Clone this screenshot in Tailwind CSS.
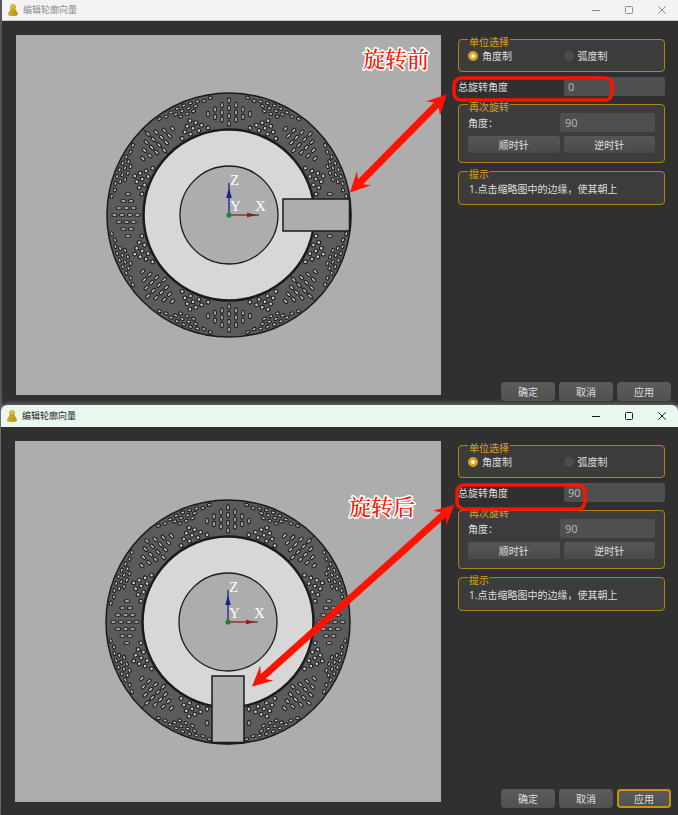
<!DOCTYPE html>
<html lang="zh-CN">
<head>
    <meta charset="UTF-8">
    <meta name="viewport" content="width=device-width, initial-scale=1.0">
    <title>编辑轮廓向量</title>
    <script src="https://cdn.jsdelivr.net/npm/@tailwindcss/browser@4"></script>
</head>
<body class="bg-[#55555a] font-['Noto_Sans','Noto_Sans_CJK_SC',sans-serif] text-[10px] leading-[14px] text-[#dedede]">

    <!-- Formas compartidas -->
    <svg class="absolute size-0" aria-hidden="true">
        <defs>
            <linearGradient id="gold" x1="0" y1="0" x2="1" y2="1">
                <stop offset="0" stop-color="#f3dc3c"/>
                <stop offset="1" stop-color="#b98a08"/>
            </linearGradient>
            <symbol id="logo" viewBox="0 0 10 12">
                <path d="M5 .4c1.500 0 2.600 1.100 2.600 2.500 0 .9-.4 1.600-1 2.100 1 .6 1.500 1.400 1.500 2.300 1 .8 1.500 1.900 1.500 3 0 .9-2 1.400-4.600 1.400S.4 11.200.4 10.300c0-1.100.5-2.200 1.500-3 0-.9.500-1.700 1.500-2.300-.6-.5-1-1.200-1-2.100C2.400 1.500 3.500.4 5 .4z" fill="url(#gold)" stroke="#9a7a10" stroke-width=".5"/>
                <path d="M3 5.300c1.200.6 2.800.6 4 0M2 7.700c1.600 1 4.400 1 6 0" fill="none" stroke="#9a7a10" stroke-width=".6"/>
            </symbol>

            <rect id="slot" x="-1.300" y="-2.600" width="2.600" height="5.200" rx="1.300"/>
            <rect id="seed" x="-2.100" y="-1.300" width="4.200" height="2.600" rx="1.300"/>
            <circle id="dot" r="1.900"/>

            <g id="slots">
                <use href="#slot" x="0" y="-114.500"/><use href="#slot" x="0" y="-107"/><use href="#slot" x="0" y="-99"/><use href="#slot" x="0" y="-91.500"/>
                <use href="#slot" x="-7" y="-110"/><use href="#slot" x="-7" y="-102.500"/><use href="#slot" x="-7" y="-95.500"/>
                <use href="#slot" x="7" y="-110"/><use href="#slot" x="7" y="-102.500"/><use href="#slot" x="7" y="-95.500"/>
                <use href="#slot" x="-14" y="-105.500"/><use href="#slot" x="-14" y="-98"/>
                <use href="#slot" x="14" y="-105.500"/><use href="#slot" x="14" y="-98"/>
                <use href="#slot" x="-21" y="-101"/><use href="#slot" x="21" y="-101"/>
            </g>
            <g id="dots">
                <use href="#dot" x="-14" y="-88.500"/><use href="#dot" x="-4.600" y="-89.500"/><use href="#dot" x="4.600" y="-89.500"/><use href="#dot" x="14" y="-88.500"/>
                <use href="#dot" x="-9" y="-93.500"/><use href="#dot" x="0" y="-94"/><use href="#dot" x="9" y="-93.500"/>
                <use href="#dot" x="-4.600" y="-98"/><use href="#dot" x="4.600" y="-98"/>
                <use href="#dot" x="0" y="-102"/>
            </g>
            <g id="seeds">
                <use href="#seed" x="0" y="-118.500"/><use href="#seed" x="-7.200" y="-118"/><use href="#seed" x="7.200" y="-118"/><use href="#seed" x="-14.300" y="-117"/><use href="#seed" x="14.300" y="-117"/>
                <use href="#seed" x="-3.600" y="-114"/><use href="#seed" x="3.600" y="-114"/><use href="#seed" x="-10.800" y="-113.300"/><use href="#seed" x="10.800" y="-113.300"/><use href="#seed" x="-20.500" y="-115"/><use href="#seed" x="20.500" y="-115"/>
                <use href="#seed" x="0" y="-109.500"/><use href="#seed" x="-7" y="-109.500"/><use href="#seed" x="7" y="-109.500"/>
                <use href="#seed" x="-27.500" y="-115.500"/><use href="#seed" x="27.500" y="-115.500"/>
            </g>
            <g id="sector">
                <use href="#slots"/>
                <use href="#dots" transform="rotate(22.500)"/>
                <use href="#seeds" transform="rotate(22.500)"/>
            </g>

            <g id="part" stroke="#1b1b1b">
                <circle r="122" fill="#5b5b5b" stroke-width="1.500"/>
                <path d="M-86-86l25 25M86 86l-25-25" stroke-width="1"/>
                <g fill="#c8c8c8" stroke-width="1.100">
                    <use href="#sector"/>
                    <use href="#sector" transform="rotate(45)"/>
                    <use href="#sector" transform="rotate(90)"/>
                    <use href="#sector" transform="rotate(135)"/>
                    <use href="#sector" transform="rotate(180)"/>
                    <use href="#sector" transform="rotate(225)"/>
                    <use href="#sector" transform="rotate(270)"/>
                    <use href="#sector" transform="rotate(315)"/>
                </g>
                <circle r="85.500" fill="#d7d7d7" stroke-width="2.500"/>
                <circle r="49" fill="#adadad" stroke-width="1.300"/>
                <path d="M54-16h66.500a122 122 0 0 1 0 32H54z" fill="#adadad" stroke-width="1.500"/>
                <path d="M120.500-16v32" stroke-width="1.500"/>
            </g>
            <g id="axes">
                <path d="M0 0V-32" stroke="#20208c" stroke-width="1.300"/>
                <path d="M0-27l2.800 10h-5.600z" fill="#20208c"/>
                <path d="M0 0H30" stroke="#8c2020" stroke-width="1.300"/>
                <path d="M28 0l-10-2.300v4.600z" fill="#8c2020"/>
                <circle r="2.600" fill="#178a2a"/>
                <g fill="#fff" font-family="Liberation Serif, serif" font-size="15">
                    <text x="1" y="-30">Z</text>
                    <text x="1" y="-4">Y</text>
                    <text x="26" y="-4">X</text>
                </g>
            </g>
        </defs>
    </svg>

    <div class="relative">
        <!-- Ventana antes de rotar -->
        <section class="ml-[2px] bg-[#303030]">
            <header class="flex h-[21px] items-center border-b border-[#c8c8c8] bg-[#f3f3f3] pl-1.5 text-[#8c8c8c]">
                <svg class="h-3 w-2.5"><use href="#logo"/></svg>
                <h1 class="ml-[5px] flex-1 text-[9px] leading-3">编辑轮廓向量</h1>
                <button type="button" aria-label="最小化" class="flex h-5 w-[33px] items-center justify-center"><svg class="size-2" viewBox="0 0 8 8" fill="none" stroke="currentColor"><path d="M0 4.500h8"/></svg></button>
                <button type="button" aria-label="最大化" class="flex h-5 w-[33px] items-center justify-center"><svg class="size-2" viewBox="0 0 8 8" fill="none" stroke="currentColor"><rect x=".5" y=".5" width="7" height="7" rx="1"/></svg></button>
                <button type="button" aria-label="关闭" class="flex h-5 w-[33px] items-center justify-center"><svg class="size-2" viewBox="0 0 8 8" fill="none" stroke="currentColor"><path d="M.3.3l7.400 7.400M7.700.3L.3 7.700"/></svg></button>
            </header>
            <div class="flex pl-3.5">
                <div class="mt-3.5 mb-2.5 flex h-[360px] flex-1 items-center justify-center bg-[#adadad]">
                    <svg class="size-[250px]" viewBox="-125 -125 250 250">
                        <use href="#part"/>
                        <use href="#axes"/>
                    </svg>
                </div>
                <form class="flex w-[237px] flex-col justify-between pt-[11px] pb-1 pl-[17px]">
                    <div class="mr-[13px]">
                        <fieldset class="rounded border border-[#b08318] bg-[#3c3c3c] px-[9px] pb-1.5">
                            <legend class="px-px pt-[5px] leading-[10px] text-[#d9a01c]">单位选择</legend>
                            <div class="grid h-[18px] grid-cols-2 items-center gap-1">
                                <label class="flex items-center gap-1"><input type="radio" name="unit1" checked class="size-2.5 appearance-none rounded-full bg-[#4c4c4c] checked:border-3 checked:border-[#d9a01c] checked:bg-white">角度制</label>
                                <label class="flex items-center gap-1"><input type="radio" name="unit1" class="size-2.5 appearance-none rounded-full bg-[#4c4c4c] checked:border-3 checked:border-[#d9a01c] checked:bg-white">弧度制</label>
                            </div>
                        </fieldset>
                        <div class="mt-[5px] flex items-center justify-between">
                            <label for="total1">总旋转角度</label>
                            <input id="total1" type="text" value="0" class="h-[19px] w-[101px] rounded-xs bg-[#4f4f4f] px-1 text-[11px] text-[#b4b4b4]">
                        </div>
                        <fieldset class="mt-px rounded border border-[#b08318] bg-[#3c3c3c] px-[9px] pb-[9px]">
                            <legend class="px-px pt-[5px] leading-[10px] text-[#d9a01c]">再次旋转</legend>
                            <div class="mt-px flex items-center justify-between">
                                <label for="angle1">角度：</label>
                                <input id="angle1" type="text" value="90" class="h-[19px] w-[95px] rounded-xs bg-[#4f4f4f] px-[5px] text-[11px] text-[#b4b4b4]">
                            </div>
                            <div class="mt-1 grid grid-cols-2 gap-1">
                                <button type="button" class="h-[17px] rounded-[3px] bg-linear-to-b from-[#565656] to-[#4a4a4a]">顺时针</button>
                                <button type="button" class="h-[17px] rounded-[3px] bg-linear-to-b from-[#565656] to-[#4a4a4a]">逆时针</button>
                            </div>
                        </fieldset>
                        <fieldset class="mt-px rounded border border-[#b08318] bg-[#3c3c3c] px-[9px] pb-1.5">
                            <legend class="px-px pt-[5px] leading-[10px] text-[#d9a01c]">提示</legend>
                            <p class="mt-px h-[18px] pl-px leading-[18px]">1.点击缩略图中的边缘，使其朝上</p>
                        </fieldset>
                    </div>
                    <div class="mr-[7px] flex justify-end gap-1">
                        <button type="button" class="h-[19px] w-[54px] rounded bg-linear-to-b from-[#5c5c5c] to-[#505050]">确定</button>
                        <button type="button" class="h-[19px] w-[54px] rounded bg-linear-to-b from-[#5c5c5c] to-[#505050]">取消</button>
                        <button type="button" class="h-[19px] w-[54px] rounded bg-linear-to-b from-[#5c5c5c] to-[#505050]">应用</button>
                    </div>
                </form>
            </div>
        </section>

        <!-- Ventana después de rotar -->
        <section class="relative ml-px rounded-t-md bg-[#303030] shadow-[0_0_6px_#8a8a8a]">
            <header class="flex h-[22px] items-center rounded-t-md bg-[#e9f7ef] pl-1.5 text-[#1c1c1c]">
                <svg class="h-3 w-2.5"><use href="#logo"/></svg>
                <h1 class="ml-[5px] flex-1 text-[9px] leading-3">编辑轮廓向量</h1>
                <button type="button" aria-label="最小化" class="flex h-5 w-[33px] items-center justify-center"><svg class="size-2" viewBox="0 0 8 8" fill="none" stroke="currentColor"><path d="M0 4.500h8"/></svg></button>
                <button type="button" aria-label="最大化" class="flex h-5 w-[33px] items-center justify-center"><svg class="size-2" viewBox="0 0 8 8" fill="none" stroke="currentColor"><rect x=".5" y=".5" width="7" height="7" rx="1"/></svg></button>
                <button type="button" aria-label="关闭" class="flex h-5 w-[33px] items-center justify-center"><svg class="size-2" viewBox="0 0 8 8" fill="none" stroke="currentColor"><path d="M.3.3l7.400 7.400M7.700.3L.3 7.700"/></svg></button>
            </header>
            <div class="flex pl-3.5">
                <div class="mt-3.5 mb-[13px] flex h-[361px] flex-1 items-center justify-center bg-[#adadad]">
                    <svg class="size-[250px]" viewBox="-125 -125 250 250">
                        <use href="#part" transform="rotate(90)"/>
                        <use href="#axes"/>
                    </svg>
                </div>
                <form class="flex w-[237px] flex-col justify-between pt-[11px] pb-[7px] pl-[17px]">
                    <div class="mr-[13px]">
                        <fieldset class="rounded border border-[#b08318] bg-[#3c3c3c] px-[9px] pb-1.5">
                            <legend class="px-px pt-[5px] leading-[10px] text-[#d9a01c]">单位选择</legend>
                            <div class="grid h-[18px] grid-cols-2 items-center gap-1">
                                <label class="flex items-center gap-1"><input type="radio" name="unit2" checked class="size-2.5 appearance-none rounded-full bg-[#4c4c4c] checked:border-3 checked:border-[#d9a01c] checked:bg-white">角度制</label>
                                <label class="flex items-center gap-1"><input type="radio" name="unit2" class="size-2.5 appearance-none rounded-full bg-[#4c4c4c] checked:border-3 checked:border-[#d9a01c] checked:bg-white">弧度制</label>
                            </div>
                        </fieldset>
                        <div class="mt-[5px] flex items-center justify-between">
                            <label for="total2">总旋转角度</label>
                            <input id="total2" type="text" value="90" class="h-[19px] w-[101px] rounded-xs bg-[#4f4f4f] px-1 text-[11px] text-[#b4b4b4]">
                        </div>
                        <fieldset class="mt-px rounded border border-[#b08318] bg-[#3c3c3c] px-[9px] pb-[9px]">
                            <legend class="px-px pt-[5px] leading-[10px] text-[#d9a01c]">再次旋转</legend>
                            <div class="mt-px flex items-center justify-between">
                                <label for="angle2">角度：</label>
                                <input id="angle2" type="text" value="90" class="h-[19px] w-[95px] rounded-xs bg-[#4f4f4f] px-[5px] text-[11px] text-[#b4b4b4]">
                            </div>
                            <div class="mt-1 grid grid-cols-2 gap-1">
                                <button type="button" class="h-[17px] rounded-[3px] bg-linear-to-b from-[#565656] to-[#4a4a4a]">顺时针</button>
                                <button type="button" class="h-[17px] rounded-[3px] bg-linear-to-b from-[#565656] to-[#4a4a4a]">逆时针</button>
                            </div>
                        </fieldset>
                        <fieldset class="mt-px rounded border border-[#b08318] bg-[#3c3c3c] px-[9px] pb-1.5">
                            <legend class="px-px pt-[5px] leading-[10px] text-[#d9a01c]">提示</legend>
                            <p class="mt-px h-[18px] pl-px leading-[18px]">1.点击缩略图中的边缘，使其朝上</p>
                        </fieldset>
                    </div>
                    <div class="mr-[7px] flex justify-end gap-1">
                        <button type="button" class="h-[19px] w-[54px] rounded bg-linear-to-b from-[#5c5c5c] to-[#505050]">确定</button>
                        <button type="button" class="h-[19px] w-[54px] rounded bg-linear-to-b from-[#5c5c5c] to-[#505050]">取消</button>
                        <button type="button" class="h-[19px] w-[54px] rounded bg-linear-to-b from-[#5c5c5c] to-[#505050] ring-2 ring-[#c8900f] ring-inset">应用</button>
                    </div>
                </form>
            </div>
        </section>

        <!-- Anotaciones rojas sobre las dos ventanas -->
        <svg class="pointer-events-none absolute top-0 right-0 h-[815px] w-[678px]" viewBox="0 0 678 815">
            <g fill="none" stroke="#ff1200" stroke-width="3.500">
                <rect x="454" y="78" width="158" height="22" rx="7"/>
                <rect x="457" y="485" width="128" height="24" rx="7"/>
            </g>
            <g fill="#ff1200">
                <path transform="translate(350 192.500) rotate(-45.400)" d="M0 0L20-10 15-3.500H123L118-10 138 0 118 10 123 3.500H15L20 10z"/>
                <path transform="translate(252 686.500) rotate(-41.900)" d="M0 0L20-10 15-3.500H257L252-10 272 0 252 10 257 3.500H15L20 10z"/>
            </g>
            <g class="font-['Liberation_Serif','Noto_Serif_CJK_SC','Noto_Sans_CJK_SC',serif] font-medium" font-size="22" fill="#ff1200" stroke="#fff" stroke-width="3" stroke-linejoin="round" paint-order="stroke">
                <text x="363" y="67">旋转前</text>
                <text x="349" y="515">旋转后</text>
            </g>
        </svg>
    </div>
</body>
</html>
